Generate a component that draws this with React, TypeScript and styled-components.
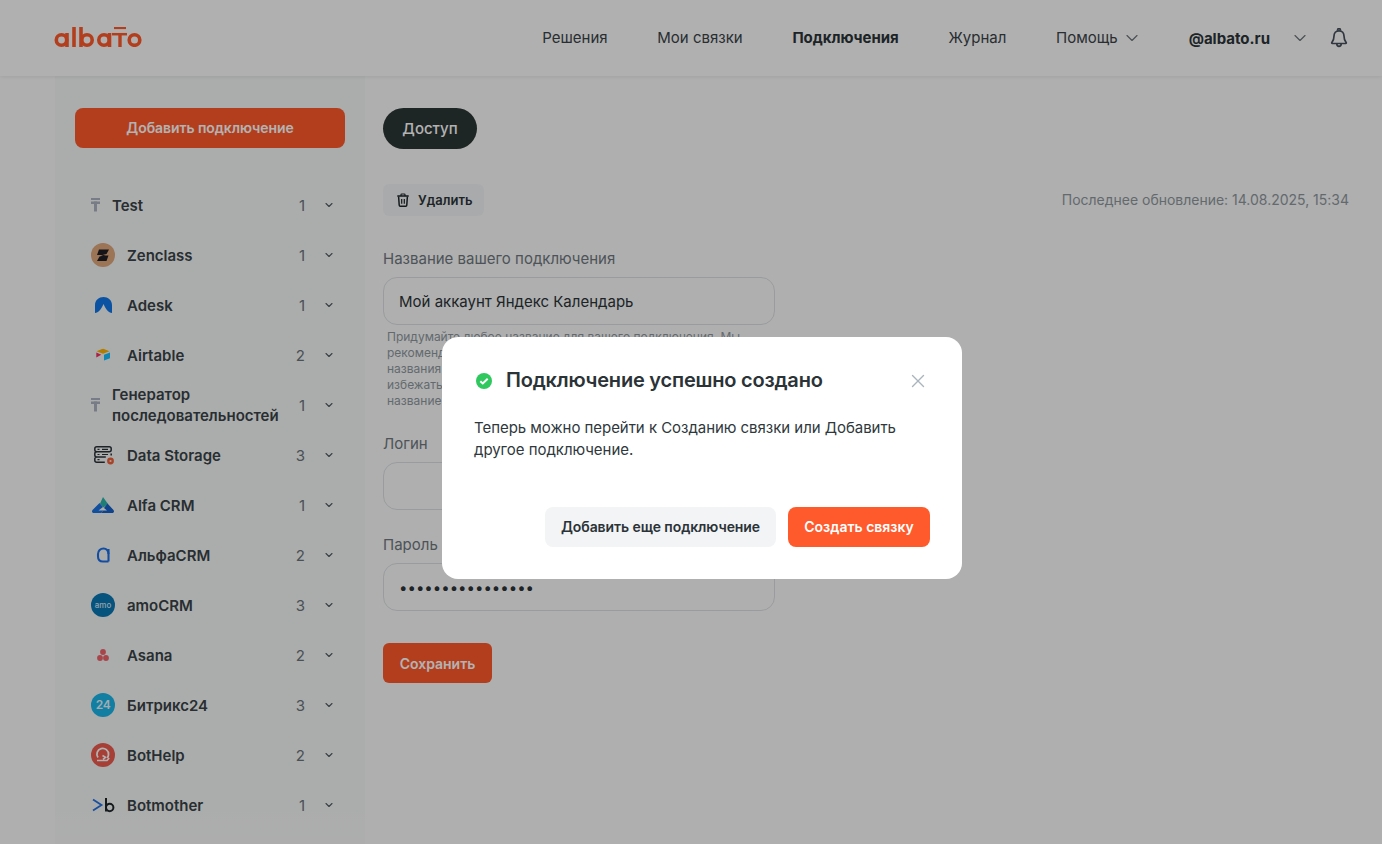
import React from "react";
import styled, { createGlobalStyle } from "styled-components";
import { ChevronDown, X } from "lucide-react";

const Global = createGlobalStyle`
  html, body { margin: 0; padding: 0; height: 100%; overflow: hidden; }
  body { background: #fbfbfb; font-family: Inter, "Noto Sans", sans-serif; color: #2b3337; }
  * { box-sizing: border-box; }
`;

const Page = styled.div`
  height: 844px;
  overflow: hidden;
  display: flex;
  flex-direction: column;
`;
const Header = styled.header`
  height: 76px;
  flex: none;
  background: #fcfcfc;
  box-shadow: 0 1px 4px rgba(0, 0, 0, 0.08);
  display: flex;
  align-items: center;
  padding: 0 34px 0 54px;
  position: relative;
  z-index: 1;
`;
const LogoSvg = styled.svg`
  display: block;
  margin-bottom: 2px;
`;
const Nav = styled.nav`
  margin-left: auto;
  display: flex;
  align-items: center;
  gap: 49.7px;
`;
const NavItem = styled.span<{ $active?: boolean }>`
  font-size: 15px;
  line-height: 20px;
  font-weight: ${(p) => (p.$active ? 700 : 400)};
  letter-spacing: ${(p) => (p.$active ? "-0.03px" : "0")};
  color: ${(p) => (p.$active ? "#2b3337" : "#3a4347")};
  display: flex;
  align-items: center;
  gap: 4px;
  svg { color: #6b7479; }
`;
const Account = styled.div`
  margin-left: 47px;
  display: flex;
  align-items: center;
  font-size: 15px;
  font-weight: 700;
  color: #2b3337;
  svg { display: block; }
`;
const AccountChevron = styled.span`
  margin-left: 20px;
  margin-right: 20px;
  display: flex;
  color: #6b7479;
`;
const Body = styled.div`
  flex: 1;
  display: flex;
  padding-left: 55px;
  min-height: 0;
`;
const Sidebar = styled.aside`
  width: 310px;
  flex: none;
  background: #f5f8f7;
  padding: 32px 20px 0;
  position: relative;
  overflow: hidden;
`;
const Fade = styled.div`
  position: absolute;
  left: 0;
  right: 0;
  bottom: 0;
  height: 34px;
  background: linear-gradient(rgba(251, 251, 251, 0), #f8f8f8);
`;
const AddButton = styled.div`
  height: 40px;
  padding-bottom: 1px;
  border-radius: 8px;
  background: #ff5a2b;
  color: #fff;
  font-size: 14px;
  font-weight: 600;
  letter-spacing: -0.08px;
  display: flex;
  align-items: center;
  justify-content: center;
`;
const List = styled.ul`
  list-style: none;
  margin: 32px 0 0;
  padding: 0;
`;
const Row = styled.li`
  height: 50px;
  display: flex;
  align-items: center;
  padding-left: 16px;
`;
const IconSlot = styled.span<{ $narrow?: boolean }>`
  width: ${(p) => (p.$narrow ? "21px" : "36px")};
  flex: none;
  display: flex;
  align-items: center;
  svg { display: block; }
`;
const Name = styled.span`
  flex: 1;
  font-size: 15px;
  line-height: 21px;
  font-weight: 600;
  color: #3a4347;
`;
const Count = styled.span`
  width: 20px;
  text-align: right;
  font-size: 15px;
  color: #6b7479;
`;
const Chevron = styled.span`
  width: 40px;
  display: flex;
  justify-content: flex-end;
  padding-right: 10px;
  color: #515a60;
`;
const Main = styled.main`
  flex: 1;
  padding: 32px 33px 0 18px;
`;
const Pill = styled.div`
  width: 94px;
  height: 41px;
  border-radius: 21px;
  background: #2c3535;
  color: #fff;
  font-size: 15px;
  font-weight: 500;
  display: flex;
  align-items: center;
  justify-content: center;
`;
const Toolbar = styled.div`
  margin-top: 35px;
  display: flex;
  justify-content: space-between;
  align-items: center;
`;
const DeleteButton = styled.div`
  height: 32px;
  width: 101px;
  border-radius: 6px;
  background: #f3f4f6;
  font-size: 13px;
  font-weight: 600;
  color: #2b3337;
  display: flex;
  align-items: center;
  gap: 9px;
  padding-left: 14px;
  svg { display: block; }
`;
const Updated = styled.span`
  font-size: 14px;
  line-height: 16px;
  padding-bottom: 1px;
  letter-spacing: -0.01px;
  color: #8f989e;
`;
const Field = styled.div<{ $top: number }>`
  width: 392px;
  margin-top: ${(p) => p.$top}px;
`;
const Label = styled.div`
  font-size: 15px;
  line-height: 22px;
  color: #6f787e;
  margin-bottom: 7px;
`;
const Input = styled.div`
  height: 48px;
  border: 1px solid #dcdfe2;
  border-radius: 14px;
  padding: 0 15px;
  display: flex;
  align-items: center;
  font-size: 15px;
  color: #2b3337;
`;
const Hint = styled.div`
  margin: 4px 0 0 4px;
  font-size: 12px;
  line-height: 16px;
  color: #8f989e;
`;
const SaveButton = styled.div`
  margin-top: 32px;
  width: 109px;
  height: 40px;
  border-radius: 6px;
  background: #ff5a2b;
  color: #fff;
  font-size: 14px;
  font-weight: 600;
  display: flex;
  align-items: center;
  justify-content: center;
`;
const Overlay = styled.div`
  position: fixed;
  inset: 0;
  z-index: 5;
  background: rgba(0, 0, 0, 0.3);
  padding: 337px 0 0 442px;
`;
const Modal = styled.div`
  width: 520px;
  height: 242px;
  background: #fff;
  border-radius: 16px;
  padding: 32px;
  display: flex;
  flex-direction: column;
`;
const ModalHead = styled.div`
  height: 24px;
  display: flex;
  align-items: center;
  color: #2b3337;
`;
const Check = styled.span`
  width: 32px;
  flex: none;
  display: flex;
  padding-left: 1px;
`;
const Title = styled.h2`
  flex: 1;
  align-self: flex-start;
  margin: 0;
  font-size: 20px;
  line-height: 22px;
  font-weight: 600;
  letter-spacing: -0.21px;
  color: #2b3337;
`;
const Close = styled.span`
  display: flex;
  color: #a9b4bf;
  margin-left: -1px;
  margin-right: 1px;
`;
const Text = styled.p`
  margin: 23.5px 0 0;
  font-size: 15px;
  line-height: 22px;
  letter-spacing: -0.04px;
  color: #2f383c;
`;
const Actions = styled.div`
  margin-top: auto;
  display: flex;
  justify-content: flex-end;
  gap: 12px;
`;
const ModalButton = styled.div<{ $primary?: boolean }>`
  height: 40px;
  width: ${(p) => (p.$primary ? "142px" : "231px")};
  padding-bottom: 1px;
  border-radius: 8px;
  background: ${(p) => (p.$primary ? "#ff5a2b" : "#f3f4f6")};
  color: ${(p) => (p.$primary ? "#fff" : "#2b3337")};
  font-size: 14px;
  font-weight: 600;
  letter-spacing: ${(p) => (p.$primary ? "0" : "-0.08px")};
  display: flex;
  align-items: center;
  justify-content: center;
`;

const Logo = () => (
  <LogoSvg width="88" height="20" viewBox="0 0 88 20" fill="none" stroke="#ff5a2b" strokeWidth="3.6">
    <circle cx="7.5" cy="13" r="5.2" />
    <path d="M13 6v14" />
    <path d="M20 0v20" />
    <path d="M27 0v20" />
    <circle cx="33" cy="13" r="5.2" />
    <circle cx="50" cy="13" r="5.2" />
    <path d="M55.500 6v14" />
    <path d="M60 1h12" strokeWidth="2.200" />
    <path d="M58 7.200h15" strokeWidth="2.500" />
    <path d="M66 7v13" strokeWidth="3.400" />
    <circle cx="80.500" cy="13" r="5.300" />
  </LogoSvg>
);
const Bell = () => (
  <svg width="18" height="20" viewBox="0 0 18 20" fill="none" stroke="#47505c" strokeWidth="1.7" strokeLinejoin="round">
    <path d="M9 2.800c-3.200 0-5 2.400-5 5.200 0 3.500-.7 5-2.200 6.600-.3.4 0 .9.4.9h13.600c.4 0 .7-.5.4-.9C14.700 13 14 11.500 14 8c0-2.800-1.800-5.200-5-5.200Z" />
    <path d="M7.600 2.800V2a1.400 1.400 0 0 1 2.800 0v.8M6.800 15.800c0 3.400 4.400 3.400 4.400 0" />
  </svg>
);
const Trash = () => (
  <svg width="12" height="14" viewBox="0 0 12 14" fill="none" stroke="#1f2529" strokeWidth="1.500">
    <path d="M.3 3h11.400" />
    <path d="M4 3V1.700c0-.5.300-.7.700-.7h2.600c.4 0 .7.200.7.700V3" strokeWidth="1.200" />
    <path d="M1.600 3.500l.6 8.500c0 .8.500 1.300 1.300 1.300h5c.8 0 1.300-.5 1.300-1.300l.6-8.500" />
    <path d="M4.700 6v4.800M7.300 6v4.800" strokeWidth="1.200" />
  </svg>
);
const TIcon = () => (
  <svg width="9" height="14" viewBox="0 0 9 14" fill="#abb2c0">
    <rect x="0" y="0" width="9" height="2" />
    <rect x="0" y="3.500" width="9" height="2.500" />
    <rect x="3" y="3.500" width="3" height="10" />
  </svg>
);
const Disc = ({ bg, children }: { bg: string; children?: React.ReactNode }) => (
  <svg width="24" height="24" viewBox="0 0 24 24">
    <circle cx="12" cy="12" r="12" fill={bg} />
    {children}
  </svg>
);
const Zen = () => (
  <Disc bg="#e0a67c">
    <path d="M8 6.500h10l-2.500 4.500-6 1.500h8l-2 5.500H6l2.500-4.500 6-1.500H6Z" fill="#1e1e24" />
  </Disc>
);
const Adesk = () => (
  <svg width="24" height="24" viewBox="0 0 24 24">
    <path d="M4 20V12C4 7 8 4 12.500 4S21 7 21 12v8c-3.500-.3-6-3.500-8.500-9-2.500 5.500-5 8.700-8.500 9Z" fill="#1177e8" />
  </svg>
);
const Airtable = () => (
  <svg width="24" height="24" viewBox="0 0 24 24">
    <path d="M11 6 5.500 8.200l6.500 2.500 6.500-2.500-5.500-2.200a2.300 2.300 0 0 0-1.500 0Z" fill="#fcb400" />
    <path d="M13 11.800v5.700l6-2.300V9.500Z" fill="#18bfff" />
    <path d="M5.300 9.500v5l5-2.700Z" fill="#f82b60" />
  </svg>
);
const Storage = () => (
  <svg width="24" height="24" viewBox="0 0 24 24" fill="none" stroke="#2c3136" strokeWidth="1.500">
    <rect x="3.800" y="3.800" width="16.400" height="5" rx="2" />
    <path d="M5.800 8.800c-1.300 0-2 .9-2 2v1.200c0 1.200.8 2 2 2M20.200 10.500v2M5.800 14c-1.300 0-2 .9-2 2v1.200c0 1.200.8 2 2 2h8M5.800 14h9" />
    <path d="M6.500 6.300h2M6.500 11.500h2M6.500 16.700h2M11 6.300h6M11 11.500h6" strokeWidth="1.200" />
    <circle cx="19.500" cy="18" r="3.400" fill="#f0603a" stroke="none" />
    <circle cx="19.500" cy="18" r="1.100" fill="#fbe0d8" stroke="none" />
  </svg>
);
const AlfaCrm = () => (
  <svg width="24" height="24" viewBox="0 0 24 24">
    <path d="M12 4 17 11 12.500 14.500 9 10.500Z" fill="#2bb5a8" />
    <path d="M8.500 10 12 14 7.500 17.500H12.500L10 20H3C1 20 .5 18.500 1.500 17Z" fill="#1b72e0" />
    <path d="M16.500 10.500 22.500 17c1 1.500.5 3-1.500 3H10L12.500 17.500H16L13 15Z" fill="#1660c8" />
  </svg>
);
const AlfaA = () => (
  <svg width="24" height="24" viewBox="0 0 24 24" fill="none" stroke="#1c6fe8" strokeWidth="2.100">
    <path d="M17.500 11C17.500 7.500 15.500 5.500 12.500 5.500S7 7.500 7 11v2.500c0 3 2 5 5 5h5.500" />
    <path d="M17.500 6v12.500" />
  </svg>
);
const Amo = () => (
  <Disc bg="#0a77b5">
    <text x="12" y="14.500" textAnchor="middle" fontSize="8" fontWeight="500" fontFamily="Inter, sans-serif" fill="#d5e8f3">amo</text>
  </Disc>
);
const Asana = () => (
  <svg width="24" height="24" viewBox="0 0 24 24" fill="#f0646c">
    <circle cx="12" cy="9" r="2.900" />
    <circle cx="9" cy="15" r="2.900" />
    <circle cx="15" cy="15" r="2.900" />
  </svg>
);
const Bitrix = () => (
  <Disc bg="#1ab5e8">
    <text x="12" y="16.300" textAnchor="middle" fontSize="12" fontWeight="600" letterSpacing="-0.3" fontFamily="Inter, sans-serif" fill="#e8f7fd">24</text>
  </Disc>
);
const BotHelp = () => (
  <Disc bg="#ee5c50">
    <path d="M7 14.500A5.800 5.800 0 1 1 17.500 11.500c0 1.300-.5 2.400-1.300 3.300" fill="none" stroke="#fff" strokeWidth="1.800" />
    <path d="M6 17.500h10l2.200-2.500M11.500 12.500l3 1.800-2.500 2" fill="none" stroke="#fff" strokeWidth="1.600" />
  </Disc>
);
const Botmother = () => (
  <svg width="24" height="24" viewBox="0 0 24 24" fill="none">
    <path d="M2 6.500 10.500 12 2 17.500" stroke="#2672e0" strokeWidth="1.800" />
    <path d="M15 5v13.500M15 14.500a3.700 3.700 0 1 0 7.400 0 3.700 3.700 0 0 0-7.400 0Z" stroke="#1f2428" strokeWidth="2" />
  </svg>
);

const items: { name: string; count: number; icon: React.ReactNode; narrow?: boolean }[] = [
  { name: "Test", count: 1, icon: <TIcon />, narrow: true },
  { name: "Zenclass", count: 1, icon: <Zen /> },
  { name: "Adesk", count: 1, icon: <Adesk /> },
  { name: "Airtable", count: 2, icon: <Airtable /> },
  { name: "Генератор последовательностей", count: 1, icon: <TIcon />, narrow: true },
  { name: "Data Storage", count: 3, icon: <Storage /> },
  { name: "Alfa CRM", count: 1, icon: <AlfaCrm /> },
  { name: "АльфаCRM", count: 2, icon: <AlfaA /> },
  { name: "amoCRM", count: 3, icon: <Amo /> },
  { name: "Asana", count: 2, icon: <Asana /> },
  { name: "Битрикс24", count: 3, icon: <Bitrix /> },
  { name: "BotHelp", count: 2, icon: <BotHelp /> },
  { name: "Botmother", count: 1, icon: <Botmother /> },
];

export default function App() {
  return (
    <>
      <Global />
      <Page>
        <Header>
          <Logo />
          <Nav>
            <NavItem>Решения</NavItem>
            <NavItem>Мои связки</NavItem>
            <NavItem $active>Подключения</NavItem>
            <NavItem>Журнал</NavItem>
            <NavItem>
              Помощь <ChevronDown size={20} strokeWidth={1.4} />
            </NavItem>
          </Nav>
          <Account>
            @albato.ru
            <AccountChevron>
              <ChevronDown size={20} strokeWidth={1.4} />
            </AccountChevron>
            <Bell />
          </Account>
        </Header>
        <Body>
          <Sidebar>
            <AddButton>Добавить подключение</AddButton>
            <List>
              {items.map((it) => (
                <Row key={it.name}>
                  <IconSlot $narrow={it.narrow}>{it.icon}</IconSlot>
                  <Name>{it.name}</Name>
                  <Count>{it.count}</Count>
                  <Chevron>
                    <ChevronDown size={12} strokeWidth={2.2} />
                  </Chevron>
                </Row>
              ))}
            </List>
            <Fade />
          </Sidebar>
          <Main>
            <Pill>Доступ</Pill>
            <Toolbar>
              <DeleteButton>
                <Trash />
                Удалить
              </DeleteButton>
              <Updated>Последнее обновление: 14.08.2025, 15:34</Updated>
            </Toolbar>
            <Field $top={32}>
              <Label>Название вашего подключения</Label>
              <Input>Мой аккаунт Яндекс Календарь</Input>
              <Hint>
                Придумайте любое название для вашего подключения. Мы
                <br />
                рекомендуем использовать осмысленные
                <br />
                названия подключений, чтобы в дальнейшем
                <br />
                избежать путаницы. Например, укажите
                <br />
                название компании.
              </Hint>
            </Field>
            <Field $top={24}>
              <Label>Логин</Label>
              <Input />
            </Field>
            <Field $top={24}>
              <Label>Пароль</Label>
              <Input>••••••••••••••••</Input>
            </Field>
            <SaveButton>Сохранить</SaveButton>
          </Main>
        </Body>
      </Page>
      <Overlay>
        <Modal>
          <ModalHead>
            <Check>
              <svg width="18" height="18" viewBox="0 0 18 18">
                <circle cx="9" cy="9" r="8" fill="#2fc85e" />
                <path d="M5.300 9.200 7.800 11.500 12.700 6.800" fill="none" stroke="#fff" strokeWidth="2" />
              </svg>
            </Check>
            <Title>Подключение успешно создано</Title>
            <Close>
              <X size={22} strokeWidth={1.5} />
            </Close>
          </ModalHead>
          <Text>
            Теперь можно перейти к Созданию связки или Добавить
            <br />
            другое подключение.
          </Text>
          <Actions>
            <ModalButton>Добавить еще подключение</ModalButton>
            <ModalButton $primary>Создать связку</ModalButton>
          </Actions>
        </Modal>
      </Overlay>
    </>
  );
}
